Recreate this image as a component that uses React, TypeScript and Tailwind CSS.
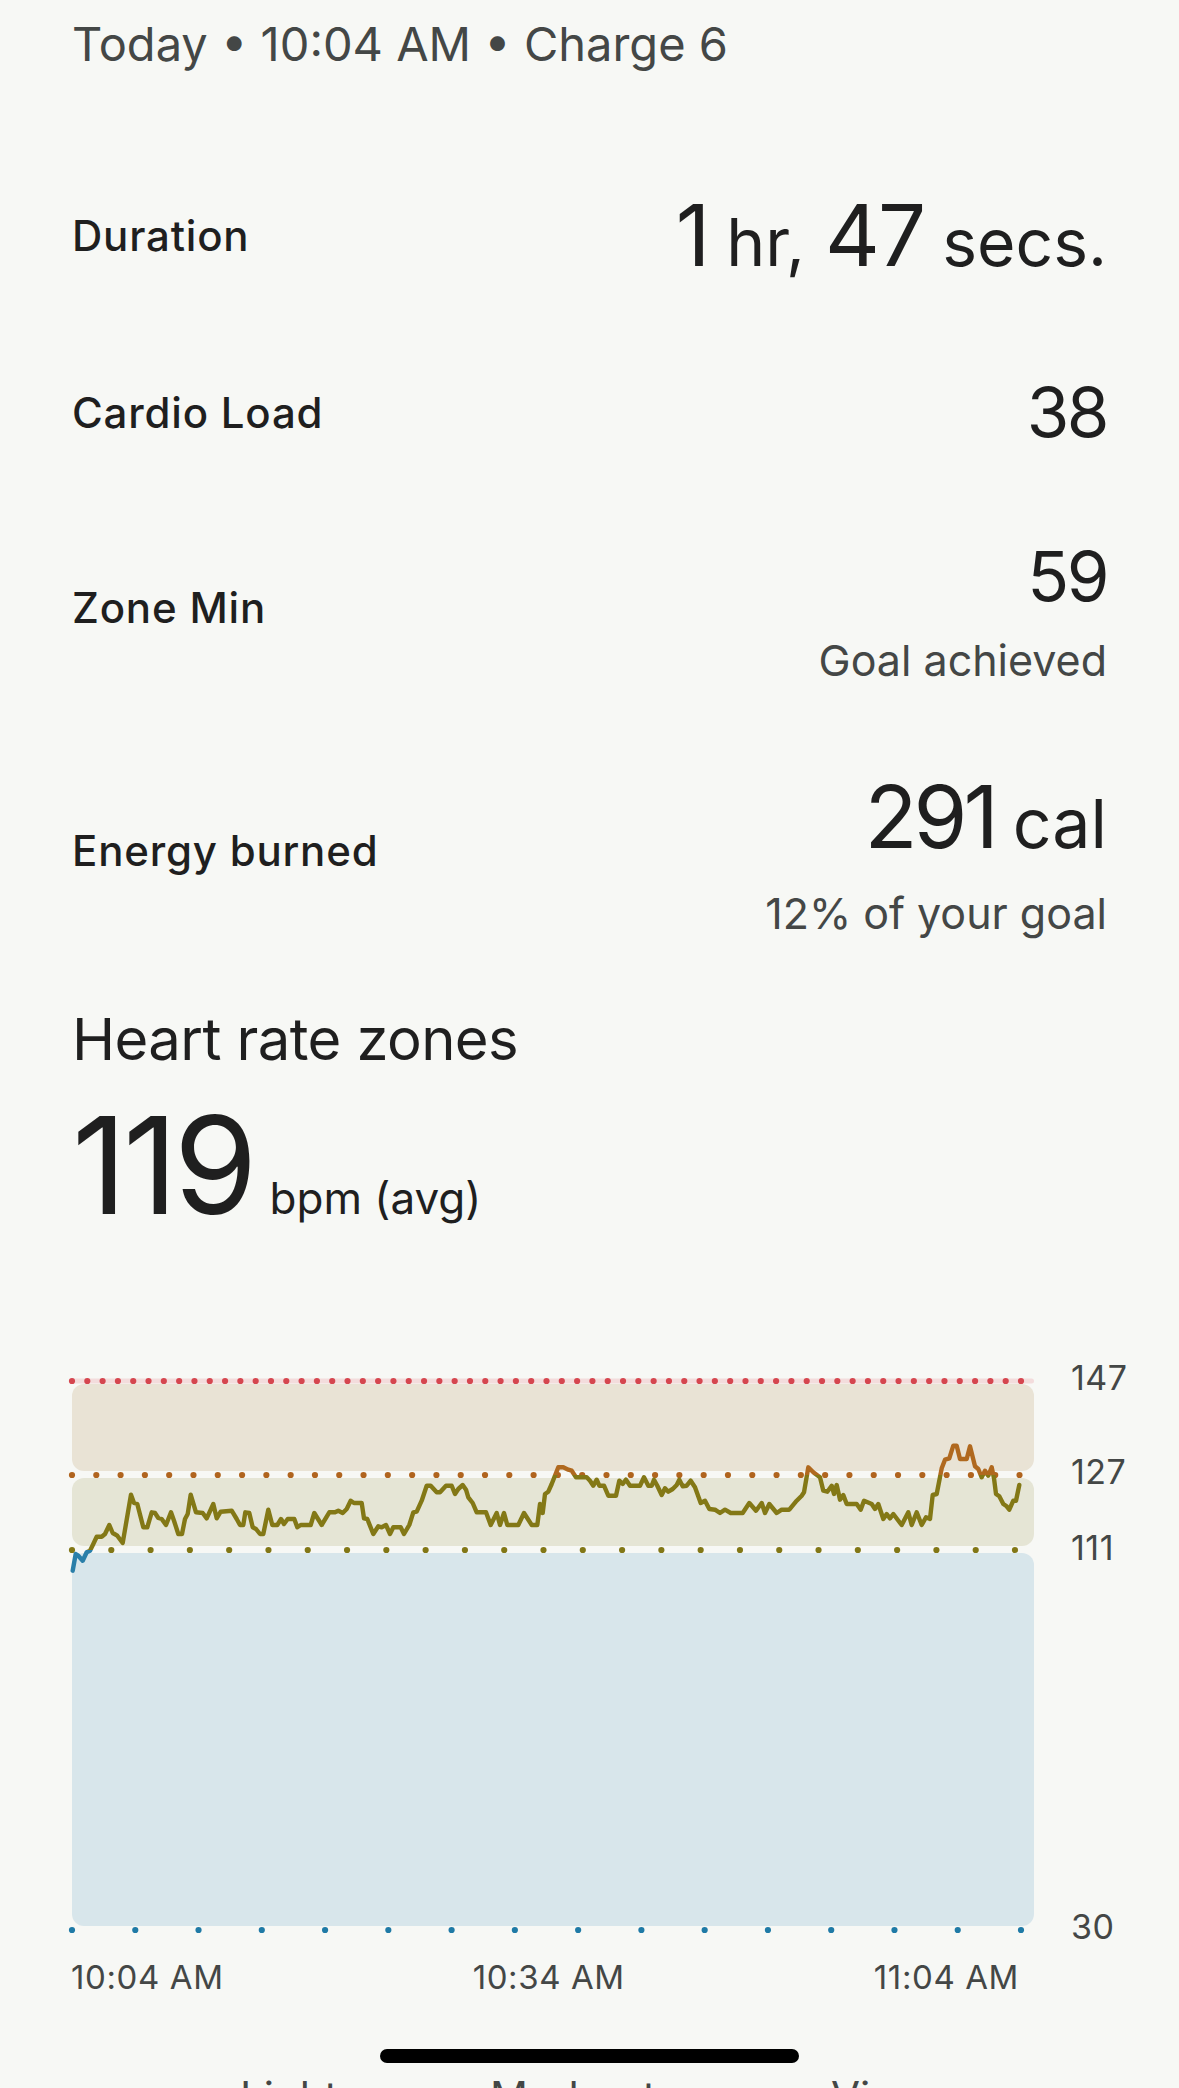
import React from "react";

// heart rate trace, page coordinates (x, y)
const trace: [number, number][] = [
  [72.7, 1571.7], [75.7, 1555], [78.3, 1556.7], [82.7, 1561.7], [86.7, 1553.3], [90, 1551.7], [93.3, 1545],
  [96.7, 1537.7], [101.7, 1537.7], [105, 1535], [109.3, 1526], [112.7, 1534], [117.3, 1536.7], [122.7, 1544],
  [131, 1495.7], [134, 1504], [137.3, 1505], [143.3, 1528.3], [147.3, 1528.3], [151.7, 1513.3], [155, 1514],
  [158.3, 1519], [161.7, 1520], [166, 1526], [171, 1513.3], [174, 1521.7], [178.3, 1535], [182, 1535],
  [185, 1520], [187.7, 1515], [190.7, 1495.7], [196, 1513.3], [202.7, 1514], [206.7, 1519.3], [213.3, 1505],
  [216.7, 1519.3], [220.7, 1512.7], [231.7, 1511.7], [236.7, 1520], [240, 1526], [243.3, 1526], [245.3, 1513.3],
  [249.3, 1514], [252.7, 1528.3], [256, 1530], [260, 1535], [263.3, 1535], [268.3, 1510.7], [272.3, 1526],
  [277.3, 1526], [281, 1520], [284, 1525], [287.7, 1520], [294.3, 1520], [297.3, 1528.3], [300.7, 1526],
  [310.7, 1526], [314.3, 1514], [321.7, 1526], [329.3, 1513.3], [335, 1513.3], [338.3, 1511.7], [342.7, 1514],
  [346.7, 1510], [350.7, 1501.7], [354, 1504], [361.7, 1504], [364, 1519.3], [367.3, 1520], [373.3, 1535],
  [378.3, 1527.3], [381.7, 1528.3], [386, 1526], [390, 1535], [393.3, 1528.3], [400.7, 1528.3], [404, 1535],
  [409.3, 1526], [413.3, 1513.3], [416.7, 1512.7], [421.7, 1501.7], [426.7, 1486.7], [430.7, 1486.7],
  [436.7, 1493.3], [440, 1493.3], [446, 1486.7], [451.7, 1486.7], [455, 1495], [458.3, 1490], [462.7, 1486],
  [466, 1490.7], [468.3, 1498.3], [472.7, 1504], [476.7, 1513.3], [486, 1513.3], [490.7, 1526], [496.7, 1514],
  [500, 1526], [504, 1514], [507.3, 1526], [518.3, 1526], [524, 1514], [531.7, 1526], [537.3, 1526], [540, 1505],
  [542.7, 1514], [545, 1495], [548.3, 1492.7], [551.7, 1485], [558.3, 1468.3], [563.3, 1468.3], [568.3, 1470.7],
  [571.7, 1471.7], [576, 1478.3], [586.7, 1478.3], [590, 1481.7], [593.3, 1486.7], [596.7, 1480.7],
  [599.3, 1486.7], [604, 1486.7], [608.3, 1496.7], [616, 1496.7], [619.3, 1481.7], [622.7, 1485], [626, 1480.7],
  [630, 1486.7], [640, 1486.7], [644, 1478.3], [648.3, 1486.7], [651.7, 1486.7], [654, 1480.7], [657.3, 1486.7],
  [661.7, 1496], [665, 1489.3], [668.3, 1492.7], [672.7, 1490], [676.7, 1486], [679.3, 1480.7], [682.7, 1487.3],
  [686.7, 1486.7], [690.7, 1481.7], [695, 1488.3], [700.7, 1504], [705, 1501.7], [709.3, 1510], [715, 1510.7],
  [720, 1514], [725, 1510.7], [730.7, 1514], [742.7, 1514], [749.3, 1504], [756, 1511.7], [761.7, 1504],
  [765, 1514], [769.3, 1505], [776.7, 1514], [781.7, 1510.7], [789.3, 1510.7], [796.7, 1501.7], [801.7, 1496.7],
  [804, 1493.3], [808.3, 1468.3], [813.3, 1473.3], [820, 1478.3], [823.3, 1491.7], [827.3, 1492.7],
  [831.7, 1486.7], [834, 1495], [836.7, 1486], [840, 1500.7], [843.3, 1496], [846.7, 1505], [856.7, 1505],
  [860.7, 1510.7], [864, 1501.7], [871.7, 1505], [875, 1510], [878.3, 1505], [883.3, 1520], [886.7, 1515],
  [890, 1519.3], [893.3, 1515], [901.7, 1526], [908.3, 1513.3], [911.7, 1526], [916.7, 1513.3], [921.7, 1526],
  [926, 1518.3], [930, 1520], [932.7, 1496], [936.7, 1495], [941.7, 1469.3], [945, 1460.7], [949.3, 1459.3],
  [953.3, 1446.7], [956.7, 1446.7], [960, 1460], [966.7, 1460], [970, 1447.3], [975, 1467.3], [978.3, 1470],
  [981.7, 1478.3], [985, 1471.7], [988.3, 1476.7], [991.7, 1468.3], [994, 1479.3], [996, 1495], [999.3, 1497.3],
  [1003.3, 1505], [1006.7, 1507.3], [1009.3, 1510.7], [1013.3, 1501.7], [1016, 1501.7], [1019.3, 1486],
];

const points = trace.map(([x, y]) => `${x},${y}`).join(" ");

function dotRow(n: number, from: number, to: number) {
  return Array.from({ length: n + 1 }, (_, i) => from + ((to - from) * i) / n);
}

const thresholds = [
  { y: 1382, n: 62, to: 1021, fill: "#d5464f", label: "147", labelY: 1390.5 },
  { y: 1476, n: 39, to: 1019.5, fill: "#b0641e", label: "127", labelY: 1485 },
  { y: 1551, n: 24, to: 1015, fill: "#827716", label: "111", labelY: 1560.5 },
  { y: 1931, n: 15, to: 1021, fill: "#1f7aa6", label: "30", labelY: 1940 },
];

function HeartRateChart() {
  return (
    <svg width="1179" height="590" viewBox="0 1355 1179 590" className="block">
      <defs>
        <clipPath id="peak">
          <rect x="0" y="1355" width="1179" height="121" />
        </clipPath>
        <clipPath id="cardio">
          <rect x="0" y="1476" width="1179" height="75" />
        </clipPath>
        <clipPath id="fatburn">
          <rect x="0" y="1551" width="1179" height="400" />
        </clipPath>
      </defs>

      <rect x="72" y="1379.5" width="962" height="5" rx="2.5" fill="#f3dcdc" />
      <rect x="72" y="1385" width="962" height="87" rx="12" fill="#e9e3d5" />
      <rect x="72" y="1479" width="962" height="68" rx="12" fill="#e5e5d5" />
      <rect x="72" y="1554" width="962" height="373" rx="12" fill="#d8e6eb" />

      {thresholds.map((t) => (
        <g key={t.label}>
          {dotRow(t.n, 72, t.to).map((x) => (
            <circle key={x} cx={x} cy={t.y} r="3.1" fill={t.fill} />
          ))}
          <text x="1071" y={t.labelY} fontSize="34" letterSpacing="0.5" fill="#444746">
            {t.label}
          </text>
        </g>
      ))}

      <g fill="none" strokeWidth="4.4" strokeLinejoin="round" strokeLinecap="round">
        <polyline points={points} stroke="#b0691f" clipPath="url(#peak)" />
        <polyline points={points} stroke="#837816" clipPath="url(#cardio)" />
        <polyline points={points} stroke="#2a7fa9" clipPath="url(#fatburn)" />
      </g>
    </svg>
  );
}

function StatRow({
  label,
  children,
  className = "",
  labelClass = "",
}: {
  label: string;
  children: React.ReactNode;
  className?: string;
  labelClass?: string;
}) {
  return (
    <div className={`flex items-center justify-between ${className}`}>
      <span className={`text-[42px] leading-none font-medium tracking-[0.8px] text-[#1f1f1f] ${labelClass}`}>{label}</span>
      <div className="flex flex-col items-end">{children}</div>
    </div>
  );
}

export default function App() {
  return (
    <div className="relative mx-auto h-[2088px] w-[1179px] overflow-hidden bg-[#f7f8f5] font-['Inter',sans-serif] text-[#1f1f1f]">
      <div className="px-[72px] pt-[20px]">
        <p className="text-[47px] leading-none text-[#444746]">Today • 10:04 AM • Charge 6</p>

        <StatRow label="Duration" className="mt-[126px]">
          <div className="flex items-baseline leading-none">
            <span className="text-[85px]">1</span>
            <span className="ml-[16px] text-[66px]">hr,</span>
            <span className="ml-[20px] text-[85px] tracking-[-2px]">47</span>
            <span className="ml-[18px] text-[66px]">secs.</span>
          </div>
        </StatRow>

        <StatRow label="Cardio Load" className="mt-[100px]">
          <span className="text-[69px] leading-none tracking-[-2.5px]">38</span>
        </StatRow>

        <StatRow label="Zone Min" className="mt-[95px]" labelClass="mb-[8px]">
          <span className="text-[69px] leading-none tracking-[-2.5px]">59</span>
          <span className="mt-[28px] text-[43px] leading-none text-[#444746]">Goal achieved</span>
        </StatRow>

        <StatRow label="Energy burned" className="mt-[91px]" labelClass="mb-[6px]">
          <div className="flex items-baseline leading-none">
            <span className="text-[87px] tracking-[-4px]">291</span>
            <span className="ml-[18px] text-[68px]">cal</span>
          </div>
          <span className="mt-[32px] text-[43px] leading-none text-[#444746]">12% of your goal</span>
        </StatRow>

        <h2 className="mt-[75px] text-[58px] leading-none font-normal tracking-[-0.6px]">Heart rate zones</h2>
        <div className="mt-[30px] flex items-baseline leading-none">
          <span className="text-[135px] tracking-[-4px]">119</span>
          <span className="ml-[16px] text-[44px]">bpm (avg)</span>
        </div>
      </div>

      <div className="mt-[121px]">
        <HeartRateChart />
      </div>

      <div className="mt-[17px] flex w-[1019px] justify-between pl-[71px] text-[33px] leading-none tracking-[0.6px] text-[#444746]">
        <span>10:04 AM</span>
        <span>10:34 AM</span>
        <span>11:04 AM</span>
      </div>

      <div className="mt-[82px] flex pl-[240px] text-[42px] leading-none text-[#444746]">
        <span className="w-[250px]">Light</span>
        <span className="w-[341px]">Moderate</span>
        <span>Vigorous</span>
      </div>

      <div className="absolute left-[380px] top-[2049px] h-[14px] w-[419px] rounded-full bg-black" />
    </div>
  );
}
